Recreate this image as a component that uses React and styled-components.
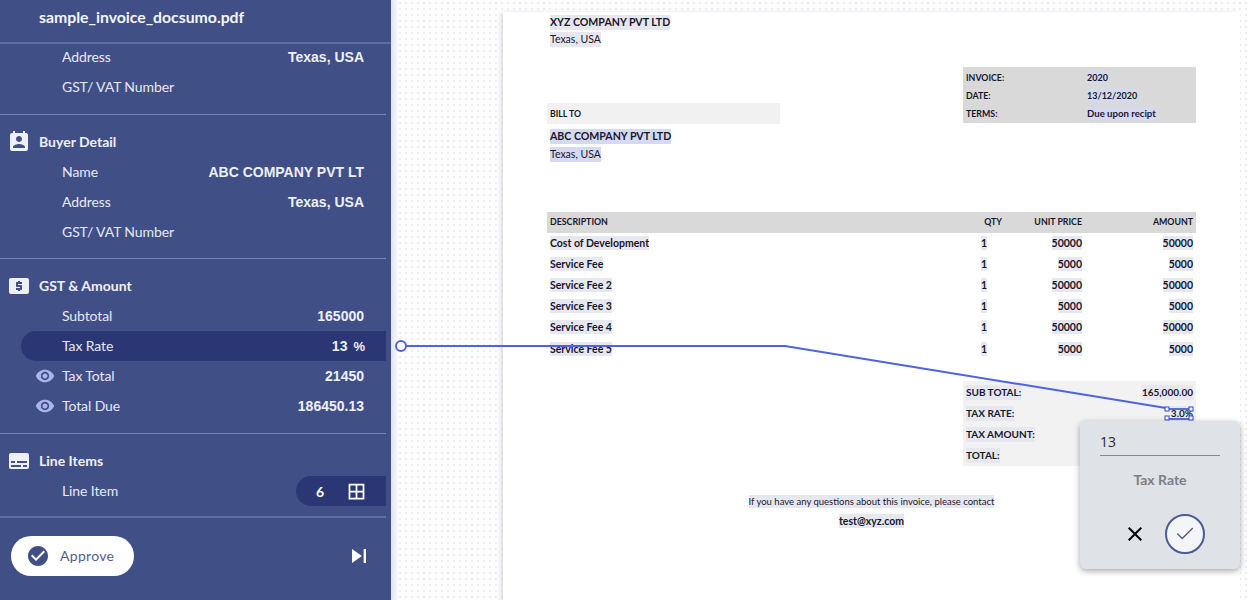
import React from "react";
import styled, { createGlobalStyle } from "styled-components";
import {
  MdPermContactCalendar,
  MdSubtitles,
  MdVisibility,
  MdBorderAll,
  MdCheckCircle,
  MdSkipNext,
  MdClose,
} from "react-icons/md";
import { Check } from "lucide-react";

const GlobalStyle = createGlobalStyle`
  html, body { margin: 0; padding: 0; height: 100%; overflow: hidden; }
  #root { height: 100%; }
  * { box-sizing: border-box; }
`;

const Screen = styled.div`
  display: flex;
  width: 1248px;
  height: 600px;
  overflow: hidden;
  font-family: Lato, sans-serif;
`;

const Sidebar = styled.aside`
  display: flex;
  flex-direction: column;
  flex: 0 0 391px;
  background: #414f87;
  color: #fff;
`;

const FileName = styled.header`
  flex: 0 0 44px;
  padding: 7px 0 0 39px;
  border-bottom: 2px solid #5e6ca3;
  font-size: 15.8px;
  font-weight: 700;
  line-height: 20px;
  color: #f4f5fa;
`;

const Fields = styled.div`
  flex: 1;
  min-height: 0;
  overflow: hidden;
  width: 386px;
`;

const Section = styled.section`
  padding: ${(p) => (p.$first ? "0" : "12px")} 0 ${(p) => p.$tail}px;
  margin-top: ${(p) => (p.$first ? "-2px" : "0")};
  border-bottom: ${(p) => (p.$last ? "none" : "1px solid #7583bd")};
`;

const SectionTitle = styled.h3`
  display: flex;
  align-items: center;
  height: 30px;
  margin: 0;
  padding-left: 7px;
  font-size: 14px;
  font-weight: 700;
  color: #eef0f8;
  svg { flex: 0 0 24px; margin-right: 8px; }
`;

const TitleText = styled.span`
  padding-bottom: 2px;
`;

const Row = styled.div`
  display: flex;
  align-items: center;
  height: 30px;
  margin-left: 21px;
  padding: 0 ${(p) => (p.$active ? "21px" : "22px")} 0 41px;
  position: relative;
  border-radius: 15px 0 0 15px;
  background: ${(p) => (p.$active ? "#2a3774" : "transparent")};
`;

const Label = styled.span`
  flex: 1;
  padding-bottom: 2px;
  font-size: 14px;
  letter-spacing: -0.1px;
  color: #e6e9f4;
`;

const Value = styled.span`
  font-family: "Liberation Sans", Arial, sans-serif;
  font-size: 14px;
  font-weight: 700;
  color: #eef0f8;
`;

const Unit = styled.span`
  margin-left: 6px;
  font-size: 13px;
`;

const EyeMark = styled.span`
  position: absolute;
  left: 14px;
  top: 5px;
  display: flex;
  color: #aab5ea;
`;

const CountPill = styled.div`
  display: flex;
  align-items: center;
  position: absolute;
  right: 0;
  top: 0;
  width: 90px;
  height: 30px;
  padding-left: 20px;
  border-radius: 15px 0 0 15px;
  background: #2a3774;
  font-size: 14px;
  font-weight: 700;
  svg { margin-left: 22px; }
`;

const Footer = styled.footer`
  display: flex;
  align-items: center;
  justify-content: space-between;
  flex: 0 0 84px;
  width: 386px;
  padding: 0 13px 6px 11px;
  border-top: 2px solid #5e6ca3;
`;

const ApproveButton = styled.button`
  display: flex;
  align-items: center;
  width: 123px;
  height: 40px;
  padding: 0 0 2px 15px;
  border: none;
  border-radius: 20px;
  background: #fff;
  color: #525e90;
  font-family: Lato, sans-serif;
  font-size: 14px;
  letter-spacing: 0.3px;
  svg { margin: 2px 10px 0 0; }
`;

const SkipButton = styled.span`
  display: flex;
  color: #fff;
`;

const Canvas = styled.main`
  flex: 1;
  position: relative;
  padding: 12px 8px 0 112px;
  background-color: #fdfdfe;
  background-image:
    linear-gradient(to right, #dfe3f6 0, #f3f4fb 6px, transparent 7px),
    radial-gradient(circle at center, #eceef6 1px, transparent 1.2px);
  background-size: 100% 100%, 6px 6px;
`;

const Page = styled.div`
  position: relative;
  height: 600px;
  padding: 0 44px;
  background: #fff;
  box-shadow: -3px 0 4px -1px #d9dae2;
  color: #17172b;
  font-family: Lato, sans-serif;
  font-size: 10.5px;
  line-height: 13px;
`;

const Word = styled.span`
  padding: 1px 0;
  font-weight: ${(p) => (p.$plain ? 400 : 700)};
  font-size: ${(p) => (p.$size ? `${p.$size}px` : "inherit")};
  background: ${(p) => (p.$bare ? "none" : p.$blue ? "#d5daf2" : "#e7e8ef")};
`;

const Head = styled.div`
  display: flex;
  justify-content: space-between;
`;

const Party = styled.div`
  flex: 0 0 233px;
`;

const Line = styled.div`
  height: ${(p) => p.$h}px;
  padding-left: 3px;
  display: flex;
  align-items: center;
`;

const BillBar = styled(Line)`
  margin-top: 57px;
  background: #f1f1f1;
`;

const Gap = styled.div`
  height: ${(p) => p.$h}px;
`;

const Meta = styled.div`
  flex: 0 0 233px;
  height: 56px;
  margin-top: 55px;
  padding: 1px 0 0 3px;
  background: #d9d9d9;
`;

const MetaRow = styled.div`
  display: grid;
  grid-template-columns: 121px 1fr;
  align-items: center;
  height: 18px;
`;

const Table = styled.div`
  margin-top: 49px;
`;

const TableRow = styled.div`
  display: grid;
  grid-template-columns: 1fr 60px 80px 111px;
  align-items: center;
  height: ${(p) => (p.$header ? "21px" : "21.2px")};
  padding: 0 3px ${(p) => (p.$header ? "2px" : "1px")};
  background: ${(p) => (p.$header ? "#d9d9d9" : "transparent")};
`;

const Num = styled.div`
  text-align: right;
  padding-right: ${(p) => p.$inset || 0}px;
`;

const Totals = styled.div`
  width: 233px;
  height: 85px;
  margin: 21px 0 0 auto;
  padding: 1px 3px 0;
  background: #f2f2f2;
  font-size: 10px;
`;

const TotalRow = styled.div`
  display: flex;
  justify-content: space-between;
  align-items: center;
  height: 21px;
`;

const Closing = styled.div`
  margin-top: 25px;
  text-align: center;
`;

const ClosingLine = styled.div`
  height: 20px;
  line-height: 20px;
`;

const Connector = styled.svg`
  position: absolute;
  left: 0;
  top: 0;
  width: 857px;
  height: 600px;
  pointer-events: none;
`;

const EditCard = styled.div`
  position: absolute;
  left: 689px;
  top: 421px;
  display: flex;
  flex-direction: column;
  width: 160px;
  height: 148px;
  padding: 11px 20px 0;
  border-radius: 6px;
  background: #dfe2e6;
  box-shadow: 0 2px 6px rgba(0, 0, 0, 0.35);
`;

const EditValue = styled.div`
  height: 24px;
  border-bottom: 1px solid #85888d;
  color: #2b2b2b;
  font-family: "Open Sans", sans-serif;
  font-size: 14px;
  line-height: 19px;
`;

const EditLabel = styled.div`
  margin-top: 14px;
  text-align: center;
  color: #7c7f85;
  font-size: 14px;
  font-weight: 700;
  line-height: 20px;
`;

const EditActions = styled.div`
  display: flex;
  align-items: center;
  justify-content: flex-end;
  gap: 18px;
  margin: 24px 15px 0 0;
`;

const CloseButton = styled.span`
  display: flex;
  color: #000;
`;

const ConfirmButton = styled.span`
  display: flex;
  align-items: center;
  justify-content: center;
  width: 40px;
  height: 40px;
  border: 2px solid #4c5b96;
  border-radius: 50%;
  background: #f4f5f8;
  color: #4c5b96;
`;

const items = [
  ["Cost of Development", "1", "50000", "50000"],
  ["Service Fee", "1", "5000", "5000"],
  ["Service Fee 2", "1", "50000", "50000"],
  ["Service Fee 3", "1", "5000", "5000"],
  ["Service Fee 4", "1", "50000", "50000"],
  ["Service Fee 5", "1", "5000", "5000"],
];

const metaRows = [
  ["INVOICE:", "2020", 9],
  ["DATE:", "13/12/2020", 9],
  ["TERMS:", "Due upon recipt", 9.6],
];

const DollarCard = () => (
  <svg width="24" height="24" viewBox="0 0 24 24" fill="currentColor">
    <path
      fillRule="evenodd"
      d="M4 4h16c1.11 0 2 .89 2 2v12c0 1.11-.89 2-2 2H4c-1.11 0-2-.89-2-2V6c0-1.11.89-2 2-2zM11 17h2v-1h1c.55 0 1-.45 1-1v-3c0-.55-.45-1-1-1h-3v-1h4V8h-2V7h-2v1h-1c-.55 0-1 .45-1 1v3c0 .55.45 1 1 1h3v1H9v2h2v1z"
    />
  </svg>
);

const Field = ({ label, value, eye, active, children }) => (
  <Row $active={active}>
    {eye && (
      <EyeMark>
        <MdVisibility size={20} />
      </EyeMark>
    )}
    <Label>{label}</Label>
    {value && <Value>{value}</Value>}
    {children}
  </Row>
);

export default function App() {
  return (
    <Screen>
      <GlobalStyle />
      <Sidebar>
        <FileName>sample_invoice_docsumo.pdf</FileName>
        <Fields>
          <Section $first $tail={12}>
            <Field label="Address" value="Texas, USA" />
            <Field label="GST/ VAT Number" />
          </Section>
          <Section $tail={11}>
            <SectionTitle>
              <MdPermContactCalendar size={24} />
              <TitleText>Buyer Detail</TitleText>
            </SectionTitle>
            <Field label="Name" value="ABC COMPANY PVT LT" />
            <Field label="Address" value="Texas, USA" />
            <Field label="GST/ VAT Number" />
          </Section>
          <Section $tail={12}>
            <SectionTitle>
              <DollarCard />
              <TitleText>GST &amp; Amount</TitleText>
            </SectionTitle>
            <Field label="Subtotal" value="165000" />
            <Field label="Tax Rate" active>
              <Value>
                13<Unit>%</Unit>
              </Value>
            </Field>
            <Field label="Tax Total" value="21450" eye />
            <Field label="Total Due" value="186450.13" eye />
          </Section>
          <Section $last $tail={0}>
            <SectionTitle>
              <MdSubtitles size={24} />
              <TitleText>Line Items</TitleText>
            </SectionTitle>
            <Field label="Line Item">
              <CountPill>
                6
                <MdBorderAll size={21} />
              </CountPill>
            </Field>
          </Section>
        </Fields>
        <Footer>
          <ApproveButton>
            <MdCheckCircle size={24} color="#414f87" />
            Approve
          </ApproveButton>
          <SkipButton>
            <MdSkipNext size={28} />
          </SkipButton>
        </Footer>
      </Sidebar>

      <Canvas>
        <Page>
          <Head>
            <Party>
              <Line $h={21}>
                <Word $size={10.6}>XYZ COMPANY PVT LTD</Word>
              </Line>
              <Line $h={13}>
                <Word $plain>Texas, USA</Word>
              </Line>
              <BillBar $h={21}>
                <Word $bare $size={8.7}>BILL TO</Word>
              </BillBar>
              <Gap $h={3} />
              <Line $h={18}>
                <Word $blue $size={10.6}>ABC COMPANY PVT LTD</Word>
              </Line>
              <Line $h={18}>
                <Word $blue $plain>Texas, USA</Word>
              </Line>
            </Party>
            <Meta>
              {metaRows.map(([name, value, size]) => (
                <MetaRow key={name}>
                  <div><Word $bare $size={8.8}>{name}</Word></div>
                  <div><Word $blue $size={size}>{value}</Word></div>
                </MetaRow>
              ))}
            </Meta>
          </Head>

          <Table>
            <TableRow $header>
              <div><Word $bare $size={8.8}>DESCRIPTION</Word></div>
              <Num><Word $bare $size={8.8}>QTY</Word></Num>
              <Num><Word $bare $size={8.8}>UNIT PRICE</Word></Num>
              <Num><Word $bare $size={8.8}>AMOUNT</Word></Num>
            </TableRow>
            {items.map(([name, qty, price, amount]) => (
              <TableRow key={name}>
                <div><Word>{name}</Word></div>
                <Num $inset={15}><Word>{qty}</Word></Num>
                <Num><Word>{price}</Word></Num>
                <Num><Word>{amount}</Word></Num>
              </TableRow>
            ))}
          </Table>

          <Totals>
            <TotalRow>
              <Word>SUB TOTAL:</Word>
              <Word>165,000.00</Word>
            </TotalRow>
            <TotalRow>
              <Word>TAX RATE:</Word>
              <Word>3.0%</Word>
            </TotalRow>
            <TotalRow>
              <Word>TAX AMOUNT:</Word>
            </TotalRow>
            <TotalRow>
              <Word>TOTAL:</Word>
            </TotalRow>
          </Totals>

          <Closing>
            <ClosingLine>
              <Word $plain $size={9.5}>If you have any questions about this invoice, please contact</Word>
            </ClosingLine>
            <ClosingLine>
              <Word>test@xyz.com</Word>
            </ClosingLine>
          </Closing>
        </Page>

        <Connector viewBox="391 0 857 600">
          <path d="M406 346 H785 L1166 408" fill="none" stroke="#4f63e0" strokeWidth="2" />
          <circle cx="401" cy="346" r="5" fill="#fff" stroke="#4f63e0" strokeWidth="2" />
          <path d="M1167 409 H1191 M1167 419 H1191" fill="none" stroke="#2f45d6" strokeWidth="1.5" />
          {[
            [1167, 409],
            [1191, 409],
            [1167, 418],
            [1191, 418],
          ].map(([x, y]) => (
            <rect key={`${x}-${y}`} x={x - 2} y={y - 2} width="4" height="4" fill="#fff" stroke="#2f45d6" />
          ))}
        </Connector>

        <EditCard>
          <EditValue>13</EditValue>
          <EditLabel>Tax Rate</EditLabel>
          <EditActions>
            <CloseButton>
              <MdClose size={24} />
            </CloseButton>
            <ConfirmButton>
              <Check size={22} strokeWidth={1.5} />
            </ConfirmButton>
          </EditActions>
        </EditCard>
      </Canvas>
    </Screen>
  );
}
